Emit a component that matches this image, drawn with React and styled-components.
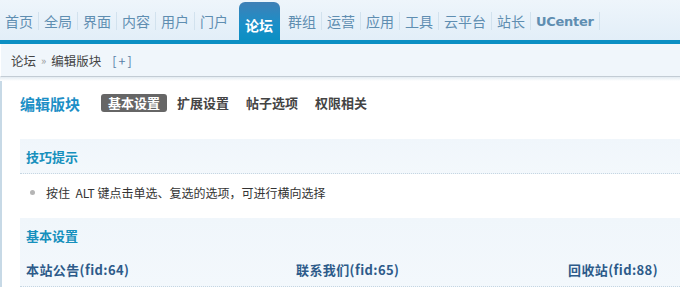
import React from 'react';
import styled, { createGlobalStyle } from 'styled-components';

const GlobalStyle = createGlobalStyle`
  html, body { margin: 0; padding: 0; background: #fff; }
  body {
    font-family: "Noto Sans CJK SC", "DejaVu Sans", sans-serif;
    font-size: 12px;
    color: #333;
  }
`;

const NAV = ['首页', '全局', '界面', '内容', '用户', '门户', '论坛', '群组', '运营', '应用', '工具', '云平台', '站长', 'UCenter'];
const TABS = ['基本设置', '扩展设置', '帖子选项', '权限相关'];

const Header = styled.header`
  height: 40px;
  background: linear-gradient(180deg, #eef5fb 0%, #e2eef8 100%);
  border-bottom: 4px solid #0b8fc3;
  display: flex;
  align-items: flex-end;
`;

const Nav = styled.ul`
  list-style: none;
  margin: 0;
  padding: 0;
  display: flex;
  align-items: flex-end;
  height: 38px;
`;

const NavItem = styled.li`
  height: ${(p) => (p.$active ? '38px' : '18px')};
  margin-bottom: ${(p) => (p.$active ? '0' : '10px')};
  display: flex;
  align-items: center;
  padding: 0 5px;
  border-right: 1px solid ${(p) => (p.$active || p.$beforeActive ? 'transparent' : '#d2e2ee')};
  font-size: ${(p) => (p.$latin ? '13px' : '14px')};
  font-weight: ${(p) => (p.$active || p.$latin ? 'bold' : 'normal')};
  font-family: ${(p) => (p.$latin ? '"DejaVu Sans", sans-serif' : 'inherit')};
  color: ${(p) => (p.$active ? '#fff' : '#5f8eb1')};
  letter-spacing: ${(p) => (p.$latin ? '-0.3px' : '0')};
  background: ${(p) => (p.$active ? 'linear-gradient(180deg, #3f80b6 0%, #1a8fc8 60%, #0b8fc3 100%)' : 'none')};
  border-radius: ${(p) => (p.$active ? '6px 6px 0 0' : '0')};
  box-sizing: border-box;
  ${(p) => p.$active && 'padding: 8px 6px 0; margin-left: 5px; margin-right: 3px;'}
`;

const Crumb = styled.div`
  height: 32px;
  background: #f0f6fb;
  border-left: 1px solid #fff;
  border-bottom: 1px solid #c3ccd4;
  display: flex;
  align-items: center;
  padding-left: 10px;
  font-size: 12.5px;
  color: #444;
  gap: 5px;
`;

const CrumbSep = styled.span`
  color: #999;
  font-size: 11px;
`;

const CrumbAdd = styled.span`
  color: #5a7ea8;
  margin-left: 6px;
  letter-spacing: 2px;
`;

const Shade = styled.div`
  height: 4px;
  background: linear-gradient(180deg, #e4ecf2 0%, #fff 100%);
`;

const Main = styled.main`
  border-left: 2px solid #c7d9e6;
  padding: 10px 0 0 18px;
`;

const TitleRow = styled.div`
  display: flex;
  align-items: center;
  height: 24px;
`;

const Title = styled.h3`
  margin: 0 21px 0 0;
  font-size: 15px;
  font-weight: bold;
  color: #1c8fc6;
`;

const Tab = styled.span`
  font-size: 13px;
  font-weight: bold;
  padding: 1px 7px;
  margin-right: 3px;
  border-radius: 3px;
  line-height: 16px;
  color: ${(p) => (p.$active ? '#fff' : '#444')};
  background: ${(p) => (p.$active ? '#666' : 'transparent')};
`;

const Section = styled.section`
  margin-top: ${(p) => p.$top}px;
  background: linear-gradient(180deg, #f0f6fb 0%, #f3f8fc 100%);
  border-bottom: 1px dotted #c6d6e2;
`;

const SectionHead = styled.div`
  height: 34px;
  display: flex;
  align-items: center;
  padding-left: 6px;
  font-size: 13px;
  font-weight: bold;
  color: #1690bd;
`;

const TipList = styled.ul`
  list-style: none;
  margin: 0;
  padding: 8px 0 0 10px;
`;

const Tip = styled.li`
  display: flex;
  align-items: center;
  height: 20px;
  font-size: 12px;
  color: #333;
  &::before {
    content: '';
    width: 5px;
    height: 5px;
    border-radius: 50%;
    background: #b5b5b5;
    margin-right: 11px;
  }
`;

const ForumRow = styled.div`
  display: grid;
  grid-template-columns: 270px 1fr auto;
  height: 34px;
  align-items: center;
  padding: 0 22px 0 6px;
  font-size: 13px;
  font-weight: bold;
  color: #2d5b8a;
  letter-spacing: 0.4px;
`;

export default function App() {
  const activeIdx = NAV.indexOf('论坛');
  return (
    <>
      <GlobalStyle />
      <Header>
        <Nav>
          {NAV.map((n, i) => (
            <NavItem
              key={n}
              $active={i === activeIdx}
              $beforeActive={i === activeIdx - 1}
              $latin={n === 'UCenter'}
            >
              {n}
            </NavItem>
          ))}
        </Nav>
      </Header>
      <Crumb>
        论坛 <CrumbSep>»</CrumbSep> 编辑版块 <CrumbAdd>[+]</CrumbAdd>
      </Crumb>
      <Shade />
      <Main>
        <TitleRow>
          <Title>编辑版块</Title>
          {TABS.map((t, i) => (
            <Tab key={t} $active={i === 0}>{t}</Tab>
          ))}
        </TitleRow>
        <Section $top={24}>
          <SectionHead>技巧提示</SectionHead>
        </Section>
        <TipList>
          <Tip>按住&nbsp; ALT 键点击单选、复选的选项，可进行横向选择</Tip>
        </TipList>
        <Section $top={16}>
          <SectionHead>基本设置</SectionHead>
          <ForumRow>
            <span>本站公告(fid:64)</span>
            <span>联系我们(fid:65)</span>
            <span>回收站(fid:88)</span>
          </ForumRow>
        </Section>
      </Main>
    </>
  );
}
